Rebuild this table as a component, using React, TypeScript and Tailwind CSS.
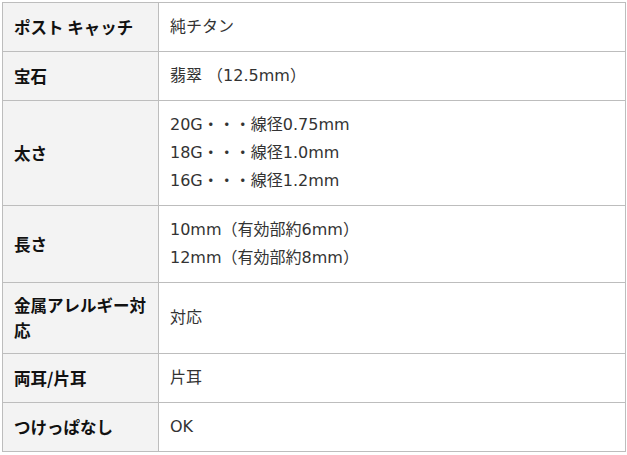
import React from 'react';

const rows: { label: string; values: string[] }[] = [
  { label: 'ポスト キャッチ', values: ['純チタン'] },
  { label: '宝石', values: ['翡翠 （12.5mm）'] },
  { label: '太さ', values: ['20G・・・線径0.75mm', '18G・・・線径1.0mm', '16G・・・線径1.2mm'] },
  { label: '長さ', values: ['10mm（有効部約6mm）', '12mm（有効部約8mm）'] },
  { label: '金属アレルギー対応', values: ['対応'] },
  { label: '両耳/片耳', values: ['片耳'] },
  { label: 'つけっぱなし', values: ['OK'] },
];

export default function App() {
  return (
    <div className="w-[627px] h-[455px] bg-white pt-[2px] pl-[2px] font-['DejaVu_Sans','Noto_Sans_CJK_JP',sans-serif]">
      <table className="w-[624px] table-fixed border-collapse border border-[#bdbdbd]">
        <colgroup>
          <col className="w-[156px]" />
          <col />
        </colgroup>
        <tbody>
          {rows.map((row) => (
            <tr key={row.label}>
              <th className="border border-[#bdbdbd] bg-[#f3f3f3] pl-[11px] pr-[10px] py-[10px] text-left align-middle text-[16.5px] leading-[25px] font-bold text-[#111] font-['Noto_Sans_CJK_JP',sans-serif]">
                {row.label}
              </th>
              <td className="border border-[#bdbdbd] px-[11px] py-[10px] align-middle text-[16px] leading-[28px] text-[#333]">
                {row.values.map((v) => (
                  <div key={v}>{v}</div>
                ))}
              </td>
            </tr>
          ))}
        </tbody>
      </table>
    </div>
  );
}
